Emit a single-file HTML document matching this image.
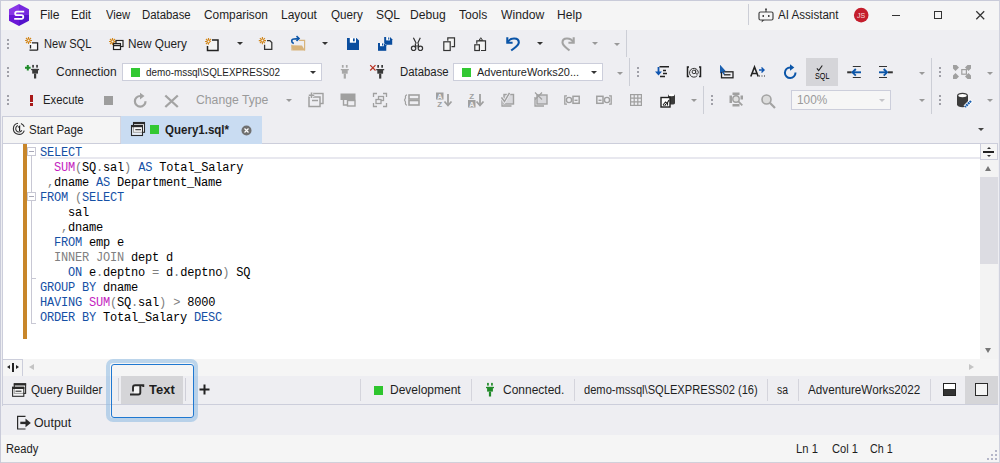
<!DOCTYPE html>
<html><head><meta charset="utf-8">
<style>
*{margin:0;padding:0;box-sizing:border-box}
html,body{width:1000px;height:463px;overflow:hidden;background:#eeeef2;font-family:"Liberation Sans",sans-serif;font-size:12px;color:#1e1e1e}
.a{position:absolute}
.t{position:absolute;white-space:nowrap;line-height:14px}
#title{left:0;top:0;width:1000px;height:30px;background:#f5f5f5}
.menu{top:8px;color:#1e1e1e}
.grip{position:absolute;width:2px;height:2px;background:#a0a0a8;box-shadow:0 4px 0 #a0a0a8,0 8px 0 #a0a0a8}
.dd{position:absolute;width:0;height:0;border-left:3px solid transparent;border-right:3px solid transparent;border-top:3px solid #333}
.dd.g{border-top-color:#999}
.sep{position:absolute;width:1px;background:#ccced6}
.combo{position:absolute;background:#fff;border:1px solid #cccedb;height:18px}
.gsq{position:absolute;width:9px;height:9px;background:#32c832}
svg{position:absolute;overflow:visible}
.code{position:absolute;font-family:"Liberation Mono",monospace;font-size:12px;letter-spacing:-0.2px;line-height:15px;white-space:pre;color:#000}
.k{color:#1550a5}.f{color:#c41ec0}.o{color:#808080}
</style></head><body>
<div class="a" style="left:0;top:0;width:1000px;height:463px;border-left:1px solid #c9cbd9;border-top:1px solid #c9cbd9;border-right:1px solid #d0d2de;pointer-events:none;z-index:50"></div>
<div id="title" class="a"></div>
<!-- logo -->
<svg style="left:9px;top:4px" width="20" height="22" viewBox="0 0 20 22"><polygon points="10,0 0,5.3 0,11 10,11" fill="#8936e6"/><polygon points="10,0 20,5.3 20,11 10,11" fill="#7628de"/><polygon points="0,11 0,16.7 10,22 10,11" fill="#6a16d6"/><polygon points="20,11 20,16.7 10,22 10,11" fill="#5514cc"/><path d="M15.2 7.6H8a1.8 1.8 0 0 0 0 3.6h4.5a1.8 1.8 0 0 1 0 3.6H5.2" stroke="#fff" stroke-width="1.8" fill="none"/></svg>
<div class="t menu" style="left:40.07px;transform:scaleX(1.0101);transform-origin:left">File</div>
<div class="t menu" style="left:71.42px;transform:scaleX(0.9633);transform-origin:left">Edit</div>
<div class="t menu" style="left:105.59px;transform:scaleX(0.9386);transform-origin:left">View</div>
<div class="t menu" style="left:142.06px;transform:scaleX(0.9480);transform-origin:left">Database</div>
<div class="t menu" style="left:204.41px;transform:scaleX(0.9885);transform-origin:left">Comparison</div>
<div class="t menu" style="left:281.19px;transform:scaleX(0.9965);transform-origin:left">Layout</div>
<div class="t menu" style="left:331.02px;transform:scaleX(0.9703);transform-origin:left">Query</div>
<div class="t menu" style="left:376px">SQL</div>
<div class="t menu" style="left:409.95px;transform:scaleX(1.0097);transform-origin:left">Debug</div>
<div class="t menu" style="left:458.60px;transform:scaleX(1.0090);transform-origin:left">Tools</div>
<div class="t menu" style="left:500.60px;transform:scaleX(1.0116);transform-origin:left">Window</div>
<div class="t menu" style="left:557.19px;transform:scaleX(1.0070);transform-origin:left">Help</div>
<div class="sep" style="left:748px;top:4px;height:21px"></div>
<div class="t menu" style="left:778.03px;transform:scaleX(0.9653);transform-origin:left">AI Assistant</div>
<svg style="left:853px;top:7px" width="16" height="16"><circle cx="8.2" cy="8.1" r="7.3" fill="#c41e2c"/><text x="8.2" y="10.7" font-size="7" fill="#f4dede" text-anchor="middle" font-family="Liberation Sans">JS</text></svg>
<div class="a" style="left:892px;top:15px;width:8px;height:1px;background:#333"></div>
<div class="a" style="left:934px;top:11px;width:8px;height:8px;border:1px solid #333"></div>
<svg style="left:976px;top:11px" width="9" height="9"><path d="M0.3 0.3L8.2 8.2M8.2 0.3L0.3 8.2" stroke="#333" stroke-width="1.25"/></svg>
<!-- ROW1 -->
<div class="grip" style="left:7px;top:39px"></div>
<svg style="left:24px;top:36px" width="16" height="16" viewBox="0 0 16 16"><g stroke="#d2871c" stroke-width="1.15"><path d="M4.5 1v7M1 4.5h7M2 2l5 5M7 2l-5 5"/></g><circle cx="4.5" cy="4.5" r="1" fill="#eeeef2"/><rect x="6.5" y="7" width="7" height="7" fill="#fafafa"/><path d="M8 6.8h6.2M13.6 6.8v7.5M5.5 14.2h8.1M6.5 9v3.5" fill="none" stroke="#222" stroke-width="1.3"/></svg>
<div class="t" style="left:43.87px;top:37px;transform:scaleX(0.9226);transform-origin:left">New SQL</div>
<svg style="left:108px;top:37px" width="16" height="16" viewBox="0 0 16 16"><g stroke="#d2871c" stroke-width="1.15"><path d="M4.5 1v7M1 4.5h7M2 2l5 5M7 2l-5 5"/></g><circle cx="4.5" cy="4.5" r="1" fill="#eeeef2"/><rect x="8" y="3.5" width="7" height="6" fill="#fff" stroke="#222" stroke-width="1.2"/><rect x="5.5" y="6.5" width="7" height="6" fill="#fff" stroke="#222" stroke-width="1.2"/><path d="M6 8.5h6" stroke="#222" stroke-width="1.5"/></svg>
<div class="t" style="left:127.63px;top:37px;transform:scaleX(0.9810);transform-origin:left">New Query</div>
<svg style="left:204px;top:37px" width="16" height="16" viewBox="0 0 16 16"><g stroke="#d2871c" stroke-width="1.15"><path d="M4.5 1v7M1 4.5h7M2 2l5 5M7 2l-5 5"/></g><circle cx="4.5" cy="4.5" r="1" fill="#eeeef2"/><path d="M8 3h6v10.5H3.5V9" fill="#f5f5f5" stroke="#222" stroke-width="1.5"/></svg>
<div class="dd" style="left:237px;top:42px"></div>


<svg style="left:250px;top:30px" width="60" height="26" viewBox="0 0 60 26"><g stroke="#d2871c" stroke-width="1.15"><path d="M12.4 7v7.2M8.8 10.6h7.2M9.9 8.1l5 5M14.9 8.1l-5 5"/></g><circle cx="12.4" cy="10.6" r="1" fill="#eeeef2"/><path d="M17 10.6h2.8l2 2v6.8h-7.2v-4.6" fill="#f3f3f3" stroke="#333" stroke-width="1.25"/><path d="M49 10.3h5.6v10.2" fill="none" stroke="#d8b47c" stroke-width="1.2"/><path d="M41.5 15.2l10.5 0.3 3 5h-12.5z" fill="#d8b47c"/><path d="M41.9 14.8v5.7" stroke="#d8b47c" stroke-width="1.1"/><path d="M43.8 13.5C41 12.5 41 9.2 44 9C45.5 9 46.5 9 48 8.5" fill="none" stroke="#0b55a8" stroke-width="1.6"/><path d="M46.5 6.2l2.5 2.3-2.5 2.3" fill="none" stroke="#0b55a8" stroke-width="1.6"/></svg>
<div class="dd" style="left:322px;top:42px"></div>





<svg style="left:340px;top:30px" width="60" height="26" viewBox="340 30 60 26"><path d="M347 37.9H356.4L359 40.5V49.9H347z" fill="#0a4d9e"/><rect x="349.8" y="37.9" width="6.2" height="4.8" fill="#fff"/><rect x="353" y="38.4" width="1.7" height="2.9" fill="#0a4d9e"/><path d="M384.2 37H390L392.2 39.2V44.7H384.2z" fill="#0a4d9e"/><rect x="386.2" y="37" width="3.8" height="3.4" fill="#fff"/><rect x="388.2" y="37.4" width="1.1" height="2.2" fill="#0a4d9e"/><path d="M378 43H384L386.2 45.2V50.8H378z" fill="#0a4d9e" stroke="#eeeef2" stroke-width="0.9"/><path d="M378 43H384L386.2 45.2V50.8H378z" fill="#0a4d9e"/><rect x="380" y="43" width="3.8" height="3.2" fill="#fff"/><rect x="382" y="43.4" width="1.1" height="2.1" fill="#0a4d9e"/></svg>
<svg style="left:400px;top:30px" width="180" height="26" viewBox="0 0 180 26"><path d="M13.4 7.8L16.3 13.5M20.3 7.8L17.6 13.5M15.4 13.5v4.5M18.4 13.5v4.5M15.4 16h3" fill="none" stroke="#333" stroke-width="1.2"/><circle cx="13.6" cy="18.3" r="2.2" fill="none" stroke="#333" stroke-width="1.2"/><circle cx="20.4" cy="18.3" r="2.2" fill="none" stroke="#333" stroke-width="1.2"/><path d="M107.5 12.5C110.5 7 118.8 7.5 118.8 12.5C118.8 15.5 115 17.5 111.2 20.5" fill="none" stroke="#0b55a8" stroke-width="2.1"/><path d="M107.3 7.2v5.5h5.3" fill="none" stroke="#0b55a8" stroke-width="2.1"/><path d="M173.5 12.5C170.5 7 162.5 7.5 162.5 12.5C162.5 15.5 166 17.5 169.5 20.5" fill="none" stroke="#a3a3a3" stroke-width="2.1"/><path d="M173.7 7.2v5.5h-5.3" fill="none" stroke="#a3a3a3" stroke-width="2.1"/></svg>
<svg style="left:440px;top:34px" width="50" height="20" viewBox="0 0 50 20"><path d="M7.8 6.8V3.8h6.7v8.9h-3" fill="#f3f3f3" stroke="#333" stroke-width="1.2"/><rect x="3.8" y="7.8" width="6.4" height="8.7" fill="#f3f3f3" stroke="#333" stroke-width="1.2"/><path d="M36.8 9.8V6.8h8.7v9.7h-4.5" fill="#f3f3f3" stroke="#333" stroke-width="1.2"/><path d="M38.8 6.5l2-2.8 2 2.8z" fill="#aaa" stroke="#333" stroke-width="0.9"/><rect x="34.8" y="10.8" width="4.6" height="5.7" fill="#f3f3f3" stroke="#333" stroke-width="1.2"/></svg>

<div class="dd" style="left:537px;top:42px"></div>

<div class="dd g" style="left:592px;top:42px"></div>
<div class="dd g" style="left:614px;top:43px"></div>
<div class="sep" style="left:626px;top:30px;height:27px"></div>
<!-- ROW2 -->
<div class="grip" style="left:7px;top:67px"></div>

<svg style="left:0;top:0" width="1000" height="463" viewBox="0 0 1000 463"><path d="M25 67.8h5.6M27.8 65v5.6" stroke="#1e8a28" stroke-width="2"/><rect x="32.20" y="64.90" width="1.70" height="2.70" fill="#3a3a3a"/><rect x="36.20" y="64.90" width="1.70" height="2.70" fill="#3a3a3a"/><rect x="31.10" y="68.90" width="8.00" height="1.30" fill="#3a3a3a"/><rect x="32.20" y="68.90" width="5.80" height="4.70" fill="#3a3a3a"/><rect x="34.00" y="73.60" width="2.20" height="4.90" fill="#3a3a3a"/><rect x="341.90" y="65.00" width="1.70" height="2.70" fill="#a8a8a8"/><rect x="345.90" y="65.00" width="1.70" height="2.70" fill="#a8a8a8"/><rect x="340.80" y="69.00" width="8.00" height="1.30" fill="#a8a8a8"/><rect x="341.90" y="69.00" width="5.80" height="4.70" fill="#a8a8a8"/><rect x="343.70" y="73.70" width="2.20" height="4.90" fill="#a8a8a8"/><path d="M370.2 65.2l5.3 5.3M375.5 65.2l-5.3 5.3" stroke="#b83020" stroke-width="1.2"/><rect x="377.30" y="65.00" width="1.70" height="2.70" fill="#3a3a3a"/><rect x="381.30" y="65.00" width="1.70" height="2.70" fill="#3a3a3a"/><rect x="376.20" y="69.00" width="8.00" height="1.30" fill="#3a3a3a"/><rect x="377.30" y="69.00" width="5.80" height="4.70" fill="#3a3a3a"/><rect x="379.10" y="73.70" width="2.20" height="4.90" fill="#3a3a3a"/></svg>
<div class="t" style="left:55.61px;top:65px;transform:scaleX(0.9993);transform-origin:left">Connection</div>
<div class="combo" style="left:122px;top:63px;width:200px"></div>
<div class="gsq" style="left:131px;top:68px"></div>
<div class="t" style="left:146.40px;top:65px;font-size:11px;transform:scaleX(0.8982);transform-origin:left">demo-mssql\SQLEXPRESS02</div>
<div class="dd" style="left:310px;top:71px"></div>


<div class="t" style="left:399.65px;top:65px;transform:scaleX(0.9475);transform-origin:left">Database</div>
<div class="combo" style="left:453px;top:63px;width:150px"></div>
<div class="gsq" style="left:462px;top:68px"></div>
<div class="t" style="left:477.40px;top:65px;font-size:11.2px;transform:scaleX(0.9789);transform-origin:left">AdventureWorks20...</div>
<div class="dd" style="left:591px;top:71px"></div>
<div class="dd g" style="left:617px;top:72px"></div>
<div class="sep" style="left:629px;top:58px;height:28px"></div>
<div class="grip" style="left:637px;top:67px"></div>
<svg style="left:654px;top:64px" width="16" height="15" viewBox="0 0 16 15"><path d="M5.5 2.8h9.5M9 6.5h3M9 9.5h4M6 12.5h5" stroke="#222" stroke-width="1.4"/><path d="M4.5 3v6" stroke="#0f55b0" stroke-width="1.8"/><path d="M1 7.5l3.5 4 3.5-4z" fill="#0f55b0"/></svg>
<svg style="left:686px;top:66px" width="16" height="12" viewBox="0 0 16 12"><path d="M3 1H1.5v9.6H3M13 1h1.5v9.6H13" fill="none" stroke="#222" stroke-width="1.5"/><path d="M11.3 9.6A4.4 4.4 0 1 1 12.3 6.2c0 1.3-0.6 2-1.4 2-0.8 0-1.2-0.7-1.2-1.4V3.6" fill="none" stroke="#333" stroke-width="1"/><circle cx="7.9" cy="5.9" r="1.8" fill="none" stroke="#333" stroke-width="1"/></svg>
<svg style="left:719px;top:64px" width="16" height="15" viewBox="0 0 16 15"><path d="M1 1v8.5l2-1.7 1.6 2.6 1-0.6-1.5-2.5h2.6z" fill="#1a5fb0"/><rect x="2.5" y="7.8" width="11.5" height="6" fill="none" stroke="#222" stroke-width="1.3"/><path d="M5 10.8h6.5" stroke="#222" stroke-width="1.3"/><path d="M1 1v8.5l2-1.7 1.6 2.6 1-0.6-1.5-2.5h2.6z" fill="#1a5fb0"/></svg>
<svg style="left:750px;top:65px" width="16" height="14" viewBox="0 0 16 14"><path d="M0.8 11.5L4.5 2l3.7 9.5M2 8.5h5" fill="none" stroke="#222" stroke-width="1.6"/><path d="M9 5h5M11.5 2.5l2.5 2.5-2.5 2.5" fill="none" stroke="#0f55b0" stroke-width="1.4"/><path d="M9 11h1M11.5 11h1M14 11h1" stroke="#222" stroke-width="1.2"/></svg>

<div class="a" style="left:806px;top:58px;width:32px;height:28px;background:#d5d5d9"></div>
<svg style="left:778px;top:60px" width="200" height="24" viewBox="0 0 200 24"><path d="M12.3 7.4A5.3 5.3 0 1 0 17.5 12.6" fill="none" stroke="#0b55a8" stroke-width="2"/><path d="M12 4.3l4.3 3.2-4.3 3.2z" fill="#0b55a8"/><path d="M38.9 8.3l1.8 2.2 3.6-5" fill="none" stroke="#222" stroke-width="1.1"/><path d="M181 7.5l-2.5-2.5h-3.5v3.5l2.5 2.5zM187 7.5l2.5-2.5h3.5v3.5l-2.5 2.5zM181 16.5l-2.5 2.5h-3.5v-3.5l2.5-2.5zM187 16.5l2.5 2.5h3.5v-3.5l-2.5-2.5z" fill="#a0a0a0"/><rect x="183.8" y="9.6" width="4.6" height="4.6" fill="none" stroke="#a0a0a0" stroke-width="1.2"/></svg>


<div class="t" style="left:814.8px;top:70.5px;font-size:8.6px;line-height:10px;color:#000;transform:scaleX(0.84);transform-origin:left">SQL</div>


<svg style="left:840px;top:60px" width="60" height="24" viewBox="0 0 60 24"><path d="M12.8 6.5h8M12.8 17.5h8" stroke="#333" stroke-width="1.1"/><path d="M7.2 12.3h4.5" stroke="#333" stroke-width="2"/><path d="M12.5 12.3h8.5" stroke="#0b55a8" stroke-width="1.9"/><path d="M15.8 9l-3.3 3.3 3.3 3.3" fill="none" stroke="#0b55a8" stroke-width="1.9"/><path d="M39 6.5h8M39 17.5h8" stroke="#333" stroke-width="1.1"/><path d="M48 12.3h4.8" stroke="#333" stroke-width="2"/><path d="M39 12.3h8" stroke="#0b55a8" stroke-width="1.9"/><path d="M43.7 9l3.3 3.3-3.3 3.3" fill="none" stroke="#0b55a8" stroke-width="1.9"/></svg>
<div class="dd g" style="left:919px;top:72px"></div>
<div class="sep" style="left:931px;top:58px;height:56px"></div>
<div class="grip" style="left:939px;top:67px"></div>

<div class="dd g" style="left:987px;top:72px"></div>
<!-- ROW3 -->
<div class="grip" style="left:7px;top:95px"></div>
<div class="a" style="left:30px;top:95px;width:3px;height:7px;background:#a81818"></div>
<div class="a" style="left:30px;top:103px;width:3px;height:2.5px;background:#a81818"></div>
<div class="t" style="left:43.46px;top:93px;transform:scaleX(0.9421);transform-origin:left">Execute</div>
<div class="a" style="left:104px;top:96px;width:9px;height:9px;background:#9d9d9d"></div>


<svg style="left:120px;top:86px" width="70" height="28" viewBox="0 0 70 28"><path d="M20.3 10A5.3 5.3 0 1 0 25.5 15.2" fill="none" stroke="#a3a3a3" stroke-width="2.2"/><path d="M20 6.8l4.5 3.3-4.5 3.3z" fill="#a3a3a3"/><path d="M45.3 9.5l12.5 11.5M57.8 9.5L45.3 21" stroke="#a3a3a3" stroke-width="2.3"/></svg>
<div class="t" style="left:195.99px;top:93px;color:#9a9a9a;transform:scaleX(1.0171);transform-origin:left">Change Type</div>
<div class="dd g" style="left:286px;top:99px"></div>
<svg style="left:308px;top:92px" width="16" height="16" viewBox="0 0 16 16"><rect x="4.5" y="1.5" width="10.5" height="10" fill="none" stroke="#a0a0a0" stroke-width="1.4"/><rect x="1" y="5" width="11" height="9.5" fill="#eeeef2" stroke="#a0a0a0" stroke-width="1.5"/><path d="M4 8.5h6" stroke="#a0a0a0" stroke-width="1.5"/><path d="M3.5 0.5v5.5M0.8 3.2h5.5" stroke="#eeeef2" stroke-width="3"/><path d="M3.5 0.5v5.5M0.8 3.2h5.5" stroke="#a0a0a0" stroke-width="1.5"/></svg>
<svg style="left:340px;top:93px" width="16" height="14" viewBox="0 0 16 14"><rect x="0.5" y="0.5" width="15" height="6.5" fill="#a0a0a0"/><path d="M3.5 7v5h3.5" fill="none" stroke="#a0a0a0" stroke-width="1.4"/><rect x="7.5" y="7.5" width="7.5" height="5.5" fill="#eeeef2" stroke="#a0a0a0" stroke-width="1.4"/></svg>
<svg style="left:373px;top:93px" width="14" height="14" viewBox="0 0 14 14"><path d="M0.5 4V0.5H4M10 0.5h3.5V4M13.5 10v3.5H10M4 13.5H0.5V10" fill="none" stroke="#a0a0a0" stroke-width="1.3"/><rect x="5.5" y="3.5" width="5" height="4" fill="none" stroke="#a0a0a0" stroke-width="1.3"/><rect x="3" y="6.5" width="5" height="4" fill="#eeeef2" stroke="#a0a0a0" stroke-width="1.3"/></svg>
<svg style="left:404px;top:94px" width="16" height="12" viewBox="0 0 16 12"><path d="M3 0.8Q1 1 1.5 4L0.5 6l1 2Q1 11 3 11.2" fill="none" stroke="#a0a0a0" stroke-width="1.2"/><rect x="5" y="1" width="10" height="4" fill="none" stroke="#a0a0a0" stroke-width="1.6"/><rect x="5" y="6.5" width="10" height="4.5" fill="none" stroke="#a0a0a0" stroke-width="1.6"/></svg>
<svg style="left:436px;top:92px" width="17" height="16" viewBox="0 0 17 16"><rect x="0" y="0.5" width="7.5" height="7" fill="#a0a0a0"/><text x="3.75" y="6.8" font-size="7" font-weight="bold" fill="#eeeef2" text-anchor="middle" font-family="Liberation Sans">A</text><text x="3.75" y="15" font-size="8" font-weight="bold" fill="#a0a0a0" text-anchor="middle" font-family="Liberation Sans">Z</text><path d="M12 2v11" stroke="#a0a0a0" stroke-width="1.8"/><path d="M8.5 9.5L12 13.5l3.5-4" fill="none" stroke="#a0a0a0" stroke-width="1.8"/></svg>
<svg style="left:468px;top:92px" width="17" height="16" viewBox="0 0 17 16"><text x="3.75" y="7" font-size="8" font-weight="bold" fill="#a0a0a0" text-anchor="middle" font-family="Liberation Sans">Z</text><rect x="0" y="8" width="7.5" height="7.5" fill="#a0a0a0"/><text x="3.75" y="14.5" font-size="7" font-weight="bold" fill="#eeeef2" text-anchor="middle" font-family="Liberation Sans">A</text><path d="M12 2v11" stroke="#a0a0a0" stroke-width="1.8"/><path d="M8.5 9.5L12 13.5l3.5-4" fill="none" stroke="#a0a0a0" stroke-width="1.8"/></svg>
<svg style="left:500px;top:92px" width="16" height="16" viewBox="0 0 16 16"><path d="M2 5v9h9.5" fill="none" stroke="#a0a0a0" stroke-width="1.3"/><rect x="4" y="2.5" width="9.5" height="9.5" fill="#d8d8dc" stroke="#a0a0a0" stroke-width="1.4"/><path d="M1.5 5.5l3 4L9.5 0.8" fill="none" stroke="#eeeef2" stroke-width="3"/><path d="M1.5 5.5l3 4L9.5 0.8" fill="none" stroke="#a0a0a0" stroke-width="1.5"/></svg>
<svg style="left:534px;top:92px" width="14" height="15" viewBox="0 0 14 15"><path d="M1 5v9h9" fill="none" stroke="#a0a0a0" stroke-width="1.3"/><rect x="3" y="3" width="10" height="9" fill="#d8d8dc" stroke="#a0a0a0" stroke-width="1.4"/><path d="M1 0.5l7 7M8 0.5l-7 7" stroke="#a0a0a0" stroke-width="1.2"/></svg>
<svg style="left:564px;top:95px" width="16" height="10" viewBox="0 0 16 10"><path d="M3 0.8H0.8v8.4H3" fill="none" stroke="#a0a0a0" stroke-width="1.3"/><circle cx="5" cy="5" r="2.6" fill="none" stroke="#a0a0a0" stroke-width="1.4"/><rect x="9" y="1.3" width="6.2" height="7" fill="none" stroke="#a0a0a0" stroke-width="1.5"/><path d="M10.5 5.3h3" stroke="#a0a0a0" stroke-width="1.4"/></svg>
<svg style="left:596px;top:95px" width="16" height="10" viewBox="0 0 16 10"><path d="M13 0.8h2.2v8.4H13" fill="none" stroke="#a0a0a0" stroke-width="1.3"/><circle cx="11" cy="5" r="2.6" fill="none" stroke="#a0a0a0" stroke-width="1.4"/><rect x="0.8" y="1.3" width="6.2" height="7" fill="none" stroke="#a0a0a0" stroke-width="1.5"/><path d="M2.5 5.3h3" stroke="#a0a0a0" stroke-width="1.4"/></svg>
<svg style="left:630px;top:94px" width="12" height="12" viewBox="0 0 12 12"><rect x="0.6" y="0.6" width="10.8" height="10.8" fill="none" stroke="#a0a0a0" stroke-width="1.2"/><path d="M4.2 0.6v10.8M7.8 0.6v10.8M0.6 4.2h10.8M0.6 7.8h10.8" stroke="#a0a0a0" stroke-width="1.2"/></svg>
<svg style="left:660px;top:92px" width="16" height="16" viewBox="0 0 16 16"><path d="M8 3.5a3.5 1.6 0 0 1 7 0v7.5a3.5 1.6 0 0 1-7 0z" fill="#3a3a3a"/><ellipse cx="11.5" cy="3" rx="3" ry="1.3" fill="#fff"/><rect x="1" y="5.5" width="9" height="9.5" fill="#fff" stroke="#222" stroke-width="1.4"/><path d="M3 13l2.5-3 1.5 1.5L9 8M3.5 13.5h1M5.5 13.5v-1.5M7.5 13.5v-2.5" stroke="#222" stroke-width="1.1" fill="none"/></svg>
<div class="dd g" style="left:691px;top:99px"></div>
<div class="sep" style="left:703px;top:86px;height:28px"></div>
<div class="grip" style="left:711px;top:95px"></div>
<svg style="left:729px;top:92px" width="15" height="15" viewBox="0 0 15 15"><rect x="3.5" y="0.5" width="7" height="2.5" fill="#a0a0a0"/><rect x="3.5" y="12" width="7" height="2.5" fill="#a0a0a0"/><rect x="0.5" y="3.5" width="2.5" height="7.5" fill="#a0a0a0"/><rect x="11.5" y="3.5" width="2.5" height="4" fill="#a0a0a0"/><circle cx="7" cy="7" r="3.2" fill="#e0e0e0" stroke="#a0a0a0" stroke-width="1.4"/><path d="M9.3 9.3l4 4" stroke="#a0a0a0" stroke-width="1.8"/></svg>
<svg style="left:761px;top:94px" width="15" height="15" viewBox="0 0 15 15"><circle cx="5.5" cy="5.5" r="4.5" fill="#dcdcdc" stroke="#a3a3a3" stroke-width="1.6"/><path d="M8.8 8.8l5.2 5.2" stroke="#a3a3a3" stroke-width="2.2"/></svg>
<div class="combo" style="left:791px;top:90px;width:100px;height:20px;background:#f6f6f6"></div>
<div class="t" style="left:797.49px;top:93px;color:#9a9a9a;transform:scaleX(0.9853);transform-origin:left">100%</div>
<div class="dd g" style="left:879px;top:99px;border-top-color:#c4c4c8"></div>
<div class="dd g" style="left:919px;top:99px"></div>
<div class="grip" style="left:939px;top:95px"></div>
<svg style="left:956px;top:92px" width="16" height="16" viewBox="0 0 16 16"><path d="M1 3.5a5.5 2.8 0 0 1 11 0v9a5.5 2.8 0 0 1-11 0z" fill="#3c3c3c"/><ellipse cx="6.5" cy="3.6" rx="4.2" ry="1.7" fill="#fff"/><path d="M15.5 8.5l-6.5 6.5" stroke="#fff" stroke-width="4"/><path d="M15 9l-6 6" stroke="#1a5fb0" stroke-width="2.4" stroke-dasharray="1.8 0.6"/></svg>
<div class="dd g" style="left:987px;top:99px"></div>
<!-- AI icon -->
<svg style="left:758px;top:8px" width="16" height="15" viewBox="0 0 16 15"><rect x="1" y="4" width="14" height="8" rx="1.5" fill="none" stroke="#444" stroke-width="1.2"/><path d="M8 1v3" stroke="#444" stroke-width="1.2"/><circle cx="8" cy="1.2" r="0.9" fill="#444"/><rect x="4.5" y="7" width="1.5" height="2" fill="#444"/><rect x="10" y="7" width="1.5" height="2" fill="#444"/><path d="M4 12l-0.5 2.5 3-2.5" fill="#444"/></svg>
<!-- TAB STRIP -->
<div class="a" style="left:2px;top:116px;width:119px;height:1px;background:#cccedb"></div>
<div class="a" style="left:2px;top:116px;width:1px;height:290px;background:#cccedb"></div>
<div class="a" style="left:3px;top:117px;width:117px;height:26px;background:#f5f5f5"></div>
<div class="a" style="left:120px;top:117px;width:1px;height:26px;background:#d6d6e0"></div>
<svg style="left:0;top:0" width="40" height="145" viewBox="0 0 40 145"><path d="M18.03 123.2A5.6 5.6 0 1 0 24.26 130.6" fill="none" stroke="#333" stroke-width="1.15"/><path d="M20.92 123.44A5.6 5.6 0 0 1 24.26 126.78" fill="none" stroke="#333" stroke-width="1.15"/><path d="M17.87 125.6A3.3 3.3 0 1 0 21.86 130.35" fill="none" stroke="#333" stroke-width="1.1"/><path d="M18.2 127.4l1.4-1.1v4.6" fill="none" stroke="#222" stroke-width="1.2"/></svg>
<div class="t" style="left:29.43px;top:123px;transform:scaleX(0.9566);transform-origin:left">Start Page</div>

<div class="a" style="left:3px;top:143px;width:995px;height:1px;background:#cccedb"></div>
<div class="a" style="left:121px;top:116px;width:141px;height:28px;background:#c9dcf2"></div>
<svg style="left:125px;top:115px" width="25" height="25" viewBox="125 115 25 25"><rect x="133.5" y="122.5" width="11" height="9.8" fill="#fafafa" stroke="#2a2a2a" stroke-width="1.1"/><rect x="133" y="122" width="12" height="2.2" fill="#2a2a2a"/><rect x="131.5" y="125.5" width="11" height="10" fill="#fafafa" fill-opacity="0.6" stroke="#2a2a2a" stroke-width="1.1"/><rect x="131" y="125" width="12" height="2.2" fill="#2a2a2a"/><path d="M135.3 129.7h5.7" stroke="#2a2a2a" stroke-width="1.1"/></svg>
<div class="gsq" style="left:150px;top:125px;width:9px;height:9px;background:#32c832"></div>
<div class="t" style="left:165.39px;top:123px;font-weight:bold;font-size:12px;transform:scaleX(0.9605);transform-origin:left">Query1.sql*</div>
<svg style="left:241px;top:125px" width="11" height="11" viewBox="0 0 11 11"><circle cx="5.5" cy="5.5" r="5" fill="#707070"/><path d="M3.5 3.5l4 4M7.5 3.5l-4 4" stroke="#fff" stroke-width="1.2"/></svg>
<div class="dd" style="left:978px;top:128px;border-top-color:#444;border-left-width:3.2px;border-right-width:3.2px;border-top-width:3.5px"></div>
<!-- EDITOR -->

<div class="a" style="left:3px;top:144px;width:978px;height:215px;background:#fff"></div>
<div class="a" style="left:40px;top:157px;width:941px;height:2px;background:#e8e8ef"></div>
<div class="a" style="left:23px;top:144px;width:4px;height:195px;background:#c8862a"></div>
<!-- fold markers -->
<div class="a" style="left:27px;top:147px;width:9px;height:9px;border:1px solid #c8c8d4;background:#fff"></div>
<div class="a" style="left:29px;top:151px;width:5px;height:1px;background:#a8a8b8"></div>
<div class="a" style="left:31px;top:156px;width:1px;height:36px;background:#c8c8d4"></div>
<div class="a" style="left:27px;top:192px;width:9px;height:9px;border:1px solid #c8c8d4;background:#fff"></div>
<div class="a" style="left:29px;top:196px;width:5px;height:1px;background:#a8a8b8"></div>
<div class="a" style="left:31px;top:201px;width:1px;height:123px;background:#c8c8d4"></div>
<div class="a" style="left:31px;top:278px;width:5px;height:1px;background:#c8c8d4"></div>
<div class="a" style="left:31px;top:323px;width:5px;height:1px;background:#c8c8d4"></div>
<div class="code" style="left:40px;top:145.5px"><span class="k">SELECT</span>
  <span class="f">SUM</span><span class="o">(</span>SQ<span class="o">.</span>sal<span class="o">)</span> <span class="k">AS</span> Total_Salary
 <span class="o">,</span>dname <span class="k">AS</span> Department_Name
<span class="k">FROM</span> <span class="o">(</span><span class="k">SELECT</span>
    sal
   <span class="o">,</span>dname
  <span class="k">FROM</span> emp e
  <span class="o">INNER JOIN</span> dept d
    <span class="k">ON</span> e<span class="o">.</span>deptno <span class="o">=</span> d<span class="o">.</span>deptno<span class="o">)</span> SQ
<span class="k">GROUP BY</span> dname
<span class="k">HAVING</span> <span class="f">SUM</span><span class="o">(</span>SQ<span class="o">.</span>sal<span class="o">)</span> <span class="o">&gt;</span> 8000
<span class="k">ORDER BY</span> Total_Salary <span class="k">DESC</span></div>
<!-- vertical scrollbar -->
<div class="a" style="left:980px;top:144px;width:18px;height:215px;background:#f3f3f3"></div>
<div class="a" style="left:980px;top:143px;width:18px;height:17px;border:1px solid #cccedb;background:#f5f5f5"></div>
<div class="a" style="left:983px;top:151px;width:11px;height:2px;background:#222"></div>
<div class="dd" style="left:986.5px;top:155px;border-top:2px solid #333;border-left-width:2.5px;border-right-width:2.5px"></div>
<div class="dd" style="left:986.5px;top:147px;border-top:0;border-bottom:2px solid #333;border-left-width:2.5px;border-right-width:2.5px"></div>
<div class="dd" style="left:985px;top:166px;border-top:0;border-bottom:5px solid #777;border-left-width:3.5px;border-right-width:3.5px"></div>
<div class="a" style="left:980px;top:177px;width:18px;height:87px;background:#dcdce2"></div>
<div class="dd" style="left:985px;top:348px;border-top:5px solid #777;border-left-width:3.5px;border-right-width:3.5px"></div>
<!-- horizontal scroll row -->
<div class="a" style="left:3px;top:359px;width:995px;height:17px;background:#f5f5f5"></div>
<div class="a" style="left:3px;top:359px;width:20px;height:17px;border-right:1px solid #cccedb;border-top:1px solid #cccedb"></div>
<div class="a" style="left:12px;top:363px;width:2px;height:9px;background:#222"></div>
<div class="dd" style="left:7px;top:365px;border:0;border-top:2.5px solid transparent;border-bottom:2.5px solid transparent;border-right:3px solid #222"></div>
<div class="dd" style="left:16px;top:365px;border:0;border-top:2.5px solid transparent;border-bottom:2.5px solid transparent;border-left:3px solid #222"></div>
<div class="dd" style="left:29px;top:364px;border:0;border-top:3.5px solid transparent;border-bottom:3.5px solid transparent;border-right:5px solid #c4c4c4"></div>
<div class="dd" style="left:969px;top:364px;border:0;border-top:3.5px solid transparent;border-bottom:3.5px solid transparent;border-left:5px solid #c4c4c4"></div>
<!-- BOTTOM TAB STRIP -->
<div class="a" style="left:3px;top:376px;width:995px;height:28px;background:#eeeef2"></div>
<div class="a" style="left:3px;top:404px;width:995px;height:1px;background:#cccedb"></div>
<svg style="left:5px;top:375px" width="25" height="25" viewBox="5 375 25 25"><rect x="14.3" y="383.8" width="11.3" height="9.6" fill="#fafafa" stroke="#2a2a2a" stroke-width="1.1"/><rect x="13.8" y="383.3" width="12.3" height="2.2" fill="#2a2a2a"/><rect x="12.6" y="387.3" width="11.2" height="9" fill="#fafafa" fill-opacity="0.6" stroke="#2a2a2a" stroke-width="1.1"/><rect x="12.1" y="386.8" width="12.2" height="2.2" fill="#2a2a2a"/><path d="M15.5 391.2h6" stroke="#2a2a2a" stroke-width="1.1"/></svg>
<div class="t" style="left:31.00px;top:383px;transform:scaleX(0.9737);transform-origin:left">Query Builder</div>
<div class="a" style="left:118px;top:378px;width:1px;height:23px;background:#cfcfd8"></div>
<div class="a" style="left:121px;top:376px;width:62px;height:28px;background:#d5d5d8"></div>
<div class="a" style="left:185px;top:378px;width:1px;height:23px;background:#cfcfd8"></div>
<svg style="left:120px;top:375px" width="30" height="30" viewBox="120 375 30 30"><rect x="134" y="386" width="6" height="8" fill="#f4f4f4"/><path d="M133 391.5V387.5a2.2 2.2 0 0 1 2.2-2.2H143.3v1.8" fill="none" stroke="#2a2a2a" stroke-width="1.9"/><path d="M140.3 385.5V392.5a2 2 0 0 1-2 2H130" fill="none" stroke="#2a2a2a" stroke-width="1.9"/></svg>
<div class="t" style="left:149.00px;top:383px;font-weight:bold;transform:scaleX(1.0808);transform-origin:left">Text</div>
<svg style="left:199px;top:384px" width="11" height="11" viewBox="0 0 11 11"><path d="M5.5 0.5v10M0.5 5.5h10" stroke="#222" stroke-width="2"/></svg>
<div class="a" style="left:106px;top:359px;width:92px;height:63px;border:4.5px solid rgba(140,185,225,0.55);border-radius:7px"></div>
<div class="a" style="left:110.5px;top:363.5px;width:83px;height:54px;border:1.5px solid #1f78d1;border-radius:3px"></div>
<!-- status segments -->
<div class="a" style="left:360px;top:379px;width:1px;height:22px;background:#d4d4dc"></div>
<div class="gsq" style="left:374px;top:386px;background:#2ec52e"></div>
<div class="t" style="left:390.38px;top:383px;transform:scaleX(0.9997);transform-origin:left">Development</div>
<div class="a" style="left:471px;top:379px;width:1px;height:22px;background:#d4d4dc"></div>

<svg style="left:0;top:0" width="1000" height="463" viewBox="0 0 1000 463"><rect x="487.10" y="382.90" width="1.70" height="2.70" fill="#208a28"/><rect x="491.10" y="382.90" width="1.70" height="2.70" fill="#208a28"/><rect x="486.00" y="386.90" width="8.00" height="1.30" fill="#208a28"/><rect x="487.10" y="386.90" width="5.80" height="4.70" fill="#208a28"/><rect x="488.90" y="391.60" width="2.20" height="4.90" fill="#208a28"/></svg>
<div class="t" style="left:503.00px;top:383px;transform:scaleX(0.9985);transform-origin:left">Connected.</div>
<div class="a" style="left:574px;top:379px;width:1px;height:22px;background:#d4d4dc"></div>
<div class="t" style="left:584.00px;top:383px;transform:scaleX(0.9271);transform-origin:left">demo-mssql\SQLEXPRESS02 (16)</div>
<div class="a" style="left:767px;top:379px;width:1px;height:22px;background:#d4d4dc"></div>
<div class="t" style="left:776.60px;top:383px;transform:scaleX(0.8677);transform-origin:left">sa</div>
<div class="a" style="left:798px;top:379px;width:1px;height:22px;background:#d4d4dc"></div>
<div class="t" style="left:808.00px;top:383px;transform:scaleX(0.9747);transform-origin:left">AdventureWorks2022</div>
<div class="a" style="left:930px;top:379px;width:1px;height:22px;background:#d4d4dc"></div>
<div class="a" style="left:943px;top:383px;width:13px;height:13px;border:1.3px solid #222;background:linear-gradient(#fff 45%,#333 45%)"></div>
<div class="a" style="left:965px;top:376px;width:33px;height:28px;background:#d5d5d8"></div>
<div class="a" style="left:975px;top:383px;width:13px;height:13px;border:1.3px solid #2a2a2a;background:#f4f4f4"></div>
<!-- OUTPUT PANEL -->
<svg style="left:0;top:400px" width="40" height="40" viewBox="0 400 40 40"><path d="M25.5 416.3H17.6V429H25.5" fill="none" stroke="#2a2a2a" stroke-width="1.2"/><path d="M20.3 422.9h6.5" stroke="#2a2a2a" stroke-width="2.4"/><path d="M25.5 418.6l5.3 4.3-5.3 4.3z" fill="#2a2a2a"/></svg>
<div class="t" style="left:34.21px;top:416px;transform:scaleX(1.0290);transform-origin:left">Output</div>
<!-- STATUS BAR -->
<div class="a" style="left:0;top:435px;width:1000px;height:28px;background:#f5f5f5"></div>
<div class="t" style="left:5.88px;top:442px;transform:scaleX(0.9300);transform-origin:left">Ready</div>
<div class="t" style="left:796.09px;top:442px;transform:scaleX(0.9377);transform-origin:left">Ln 1</div>
<div class="t" style="left:831.99px;top:442px;transform:scaleX(0.9270);transform-origin:left">Col 1</div>
<div class="t" style="left:869.80px;top:442px;transform:scaleX(0.8939);transform-origin:left">Ch 1</div>
<div class="a" style="left:995px;top:450px;width:2px;height:2px;background:#b4b6c8;box-shadow:-4px 4px 0 #b4b6c8,0 4px 0 #b4b6c8,-8px 8px 0 #b4b6c8,-4px 8px 0 #b4b6c8,0 8px 0 #b4b6c8"></div>
<div class="a" style="left:0;top:462px;width:1000px;height:1px;background:#d0d0da"></div>
</body></html>
